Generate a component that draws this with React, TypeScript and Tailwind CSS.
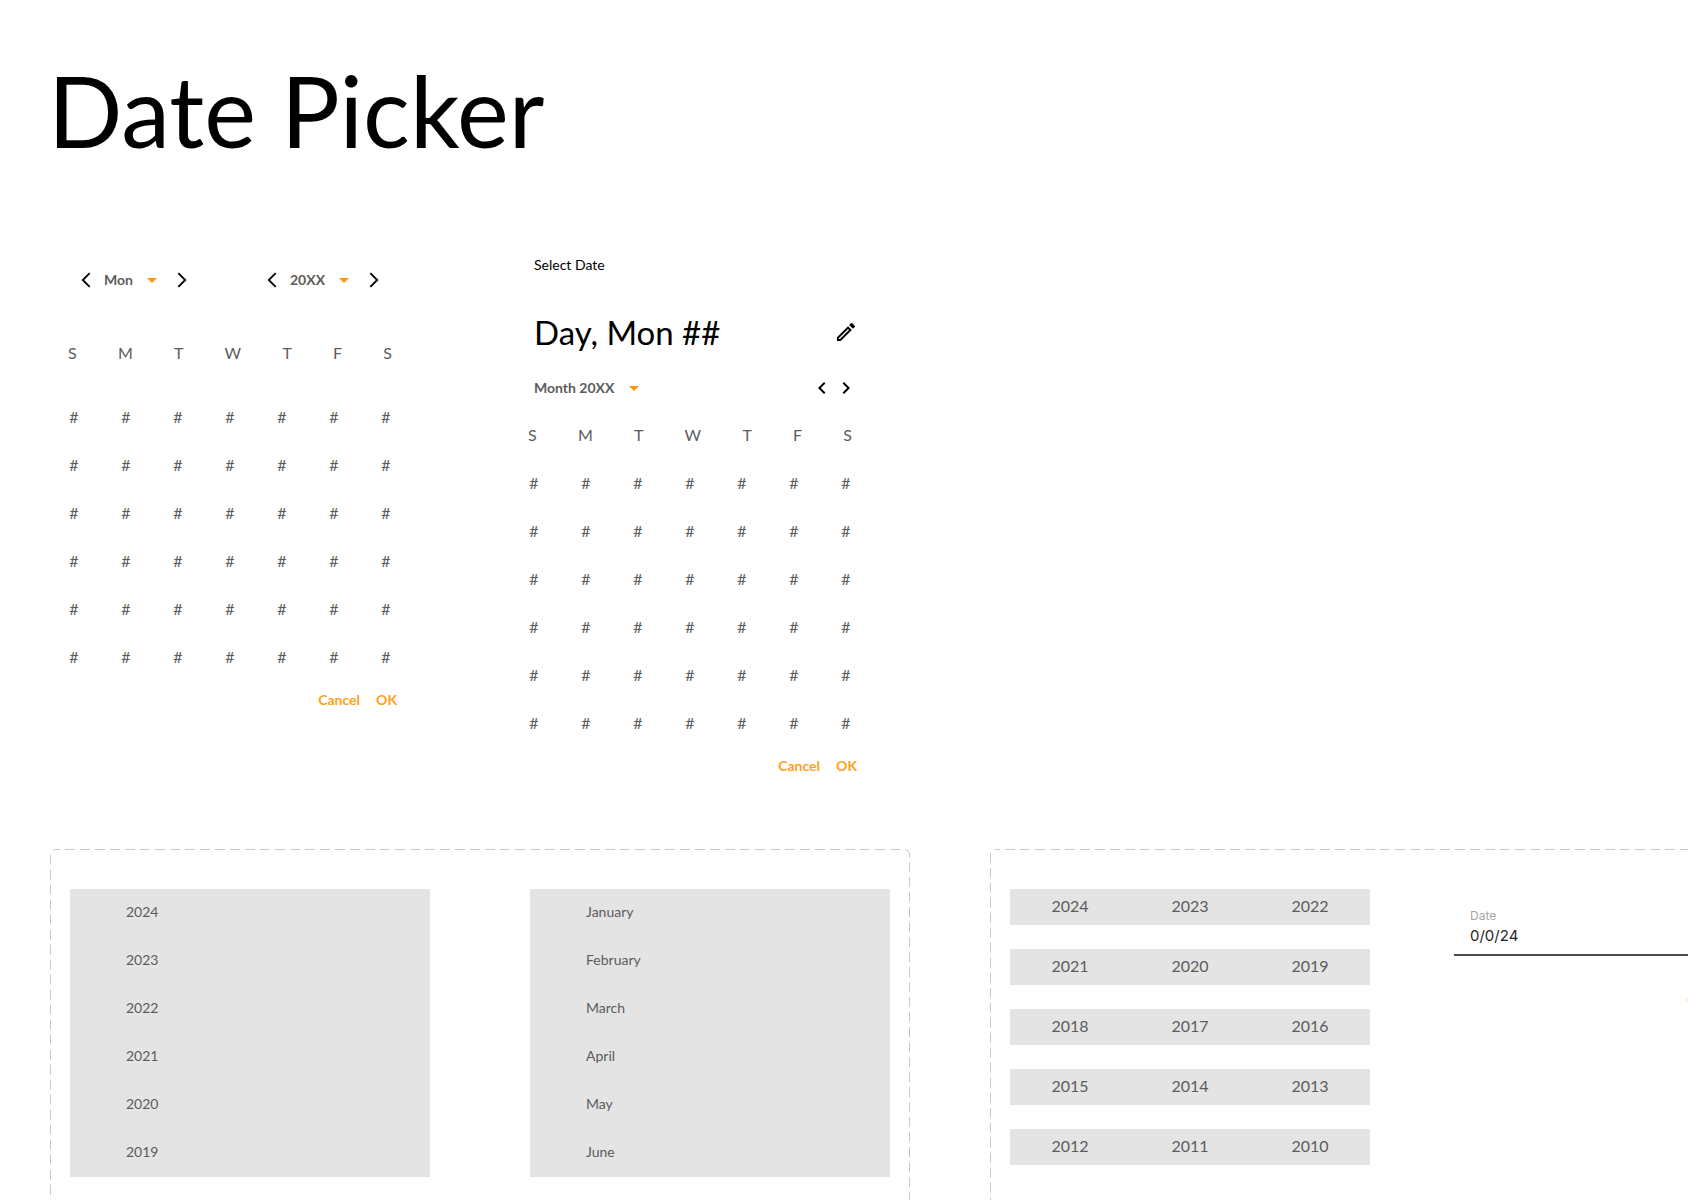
import { useState } from 'react';
import {
  MdArrowBackIosNew,
  MdArrowDropDown,
  MdArrowForwardIos,
  MdChevronLeft,
  MdChevronRight,
  MdOutlineEdit,
} from 'react-icons/md';

const weekdays = ['S', 'M', 'T', 'W', 'T', 'F', 'S'];
const weeks = [0, 1, 2, 3, 4, 5];

const years = ['2024', '2023', '2022', '2021', '2020', '2019'];
const months = ['January', 'February', 'March', 'April', 'May', 'June'];

const yearRows = [
  ['2024', '2023', '2022'],
  ['2021', '2020', '2019'],
  ['2018', '2017', '2016'],
  ['2015', '2014', '2013'],
  ['2012', '2011', '2010'],
];

function Dropdown({ label, value, width }: { label: string; value: string; width: string }) {
  return (
    <div className={`relative flex h-6 items-center ${width}`}>
      <select
        aria-label={label}
        className="h-6 w-full appearance-none bg-transparent text-sm leading-6 font-bold text-[#5c5c5c] outline-none"
      >
        <option>{value}</option>
      </select>
      <MdArrowDropDown className="pointer-events-none absolute right-0 size-6 text-[#ff9800]" />
    </div>
  );
}

function Stepper({ label, value, width }: { label: string; value: string; width: string }) {
  return (
    <div className="flex items-center gap-[9px]">
      <button type="button" aria-label={`Previous ${label}`}>
        <MdArrowBackIosNew className="size-[18px]" />
      </button>
      <Dropdown label={label} value={value} width={width} />
      <button type="button" aria-label={`Next ${label}`}>
        <MdArrowForwardIos className="size-[18px]" />
      </button>
    </div>
  );
}

function Days({ headGap }: { headGap: string }) {
  return (
    <table className="block text-[#5c5c5c]">
      <thead className={`block ${headGap}`}>
        <tr className="flex h-12 items-center justify-between px-5">
          {weekdays.map((day, i) => (
            <th key={i} className="font-normal">{day}</th>
          ))}
        </tr>
      </thead>
      <tbody className="block">
        {weeks.map((week) => (
          <tr key={week} className="grid h-12 grid-cols-7">
            {weekdays.map((_, i) => (
              <td key={i}>
                <button type="button" className="size-full">#</button>
              </td>
            ))}
          </tr>
        ))}
      </tbody>
    </table>
  );
}

function Actions({ padding }: { padding: string }) {
  return (
    <div className={`flex h-6 items-center justify-end gap-4 text-sm font-bold text-[#ff9f1a] ${padding}`}>
      <button type="button">Cancel</button>
      <button type="button">OK</button>
    </div>
  );
}

function DashedOutline() {
  return (
    <svg className="pointer-events-none absolute inset-0 size-full" fill="none" aria-hidden="true">
      <rect
        x="0.5"
        y="0.5"
        rx="4.5"
        className="h-[calc(100%-1px)] w-[calc(100%-1px)]"
        stroke="#c9c9c9"
        strokeDasharray="10 5"
        strokeDashoffset="-10"
      />
    </svg>
  );
}

function OptionList({ items }: { items: string[] }) {
  return (
    <ul className="w-[360px] shrink-0 self-start bg-[#e4e4e4] text-sm text-[#5c5c5c]">
      {items.map((item) => (
        <li key={item}>
          <button type="button" className="h-12 w-full pb-0.5 pl-14 text-left">{item}</button>
        </li>
      ))}
    </ul>
  );
}

export default function App() {
  const [date, setDate] = useState('0/0/24');

  return (
    <main className="flex h-screen flex-col overflow-hidden bg-white px-12 pt-[62px] font-['Lato',sans-serif] text-base text-black">
      <h1 className="text-[98px] leading-[96px]">Date Picker</h1>

      <div className="mt-[82px] flex shrink-0 items-start gap-24">
        <section className="w-[364px] shrink-0 pt-7">
          <div className="mb-[37px] flex h-6 items-center justify-between px-[29px]">
            <Stepper label="month" value="Mon" width="w-[60px]" />
            <Stepper label="year" value="20XX" width="w-[66px]" />
          </div>
          <Days headGap="mb-4" />
          <Actions padding="mt-[7px] pr-[15px]" />
        </section>

        <section className="w-[364px] shrink-0 pt-[15px]">
          <div className="pr-[14px] pl-[26px]">
            <p className="text-sm leading-5">Select Date</p>
            <div className="mt-[37px] flex h-10 items-center justify-between">
              <h2 className="text-[33px] leading-10">Day, Mon ##</h2>
              <button type="button" aria-label="Edit date">
                <MdOutlineEdit className="size-6" />
              </button>
            </div>
            <div className="mt-6 mb-[11px] flex h-6 items-center justify-between">
              <Dropdown label="Month and year" value="Month 20XX" width="w-[112px]" />
              <div className="flex">
                <button type="button" aria-label="Previous month">
                  <MdChevronLeft className="size-6" />
                </button>
                <button type="button" aria-label="Next month">
                  <MdChevronRight className="size-6" />
                </button>
              </div>
            </div>
          </div>
          <Days headGap="mb-0" />
          <Actions padding="mt-[7px] pr-[15px]" />
        </section>
      </div>

      <div className="mt-[71px] ml-0.5 flex shrink-0 items-start gap-20">
        <section className="relative flex h-[480px] shrink-0 gap-[100px] px-5 pt-10">
          <DashedOutline />
          <OptionList items={years} />
          <OptionList items={months} />
        </section>

        <section className="relative flex h-[480px] shrink-0 gap-[84px] px-5 pt-10">
          <DashedOutline />
          <div className="flex w-[360px] shrink-0 flex-col gap-6 text-[#5c5c5c]">
            {yearRows.map((row) => (
              <div key={row[0]} className="grid h-9 grid-cols-3 bg-[#e4e4e4]">
                {row.map((year) => (
                  <button key={year} type="button" className="pb-0.5">{year}</button>
                ))}
              </div>
            ))}
          </div>

          <div className="w-[360px] shrink-0 pt-4">
            <div className="flex h-[51px] flex-col border-b-2 border-[#4a4a4a] px-4 pt-[3px] font-['Inter',sans-serif]">
              <label htmlFor="date" className="text-xs leading-4 text-[#a6a6a6]">Date</label>
              <input
                id="date"
                type="text"
                value={date}
                onChange={(e) => setDate(e.target.value)}
                className="h-6 w-full bg-transparent text-[15px] leading-6 text-[#1f1f1f] outline-none"
              />
            </div>
            <Actions padding="mt-8 pr-12" />
          </div>
        </section>
      </div>
    </main>
  );
}
